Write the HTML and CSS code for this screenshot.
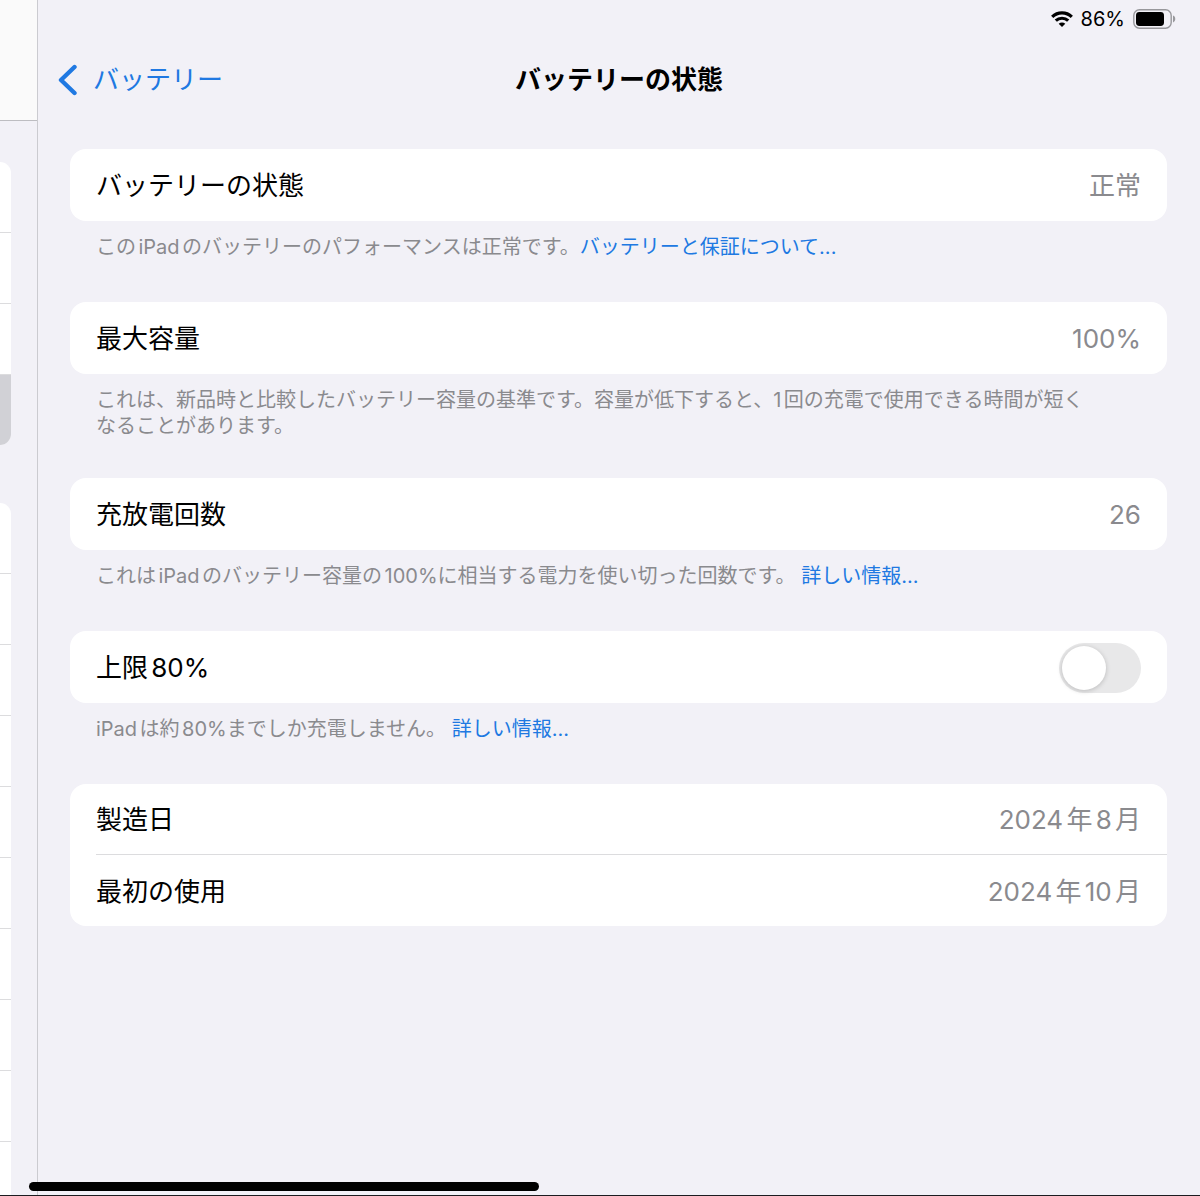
FILE: index.html
```html
<!DOCTYPE html>
<html lang="ja">
<head>
    <meta charset="UTF-8">
    <meta name="viewport" content="width=device-width, initial-scale=1.0">
    <title>バッテリーの状態</title>
    <link rel="stylesheet" href="styles.css">
</head>
<body>
    <aside class="sidebar">
        <div class="sidebar-header"></div>
        <ul class="menu">
            <li></li>
            <li></li>
            <li></li>
            <li class="selected"></li>
        </ul>
        <ul class="menu">
            <li></li>
            <li></li>
            <li></li>
            <li></li>
            <li></li>
            <li></li>
            <li></li>
            <li></li>
            <li></li>
            <li></li>
        </ul>
    </aside>

    <main class="detail">
        <div class="status-bar">
            <svg class="wifi" width="22" height="16" viewBox="0 0 22 16" fill="none" stroke="#000" stroke-width="3.200">
                <path d="M1.200 5.800C6.600 .5 15.400 .5 20.800 5.800"/>
                <path d="M4.800 9.700c3.400-3.300 9-3.300 12.400 0"/>
                <path d="M11 16 7.700 12.800c1.800-1.700 4.800-1.700 6.600 0z" fill="#000" stroke="none"/>
            </svg>
            <span>86%</span>
            <svg class="battery" width="43" height="20" viewBox="0 0 43 20">
                <rect x=".8" y=".8" width="37.400" height="18.400" rx="5.600" fill="none" stroke="#98989c" stroke-width="1.400"/>
                <rect x="3" y="3" width="28" height="14" rx="3.400" fill="#000"/>
                <path d="M40 6.600c3 1 3 5.800 0 6.800z" fill="#98989c"/>
            </svg>
        </div>

        <header class="nav-bar">
            <a href="#" class="back">
                <svg width="20" height="32" viewBox="0 0 20 32" fill="none" stroke="#2079e2" stroke-width="4.400" stroke-linecap="round" stroke-linejoin="round">
                    <path d="M16.500 3 3 16l13.500 13"/>
                </svg>
                <span>バッテリー</span>
            </a>
            <h1>バッテリーの状態</h1>
        </header>

        <div class="settings">
            <section>
                <div class="card">
                    <div class="row"><span>バッテリーの状態</span><span class="value">正常</span></div>
                </div>
                <p class="note">このiPadのバッテリーのパフォーマンスは正常です。<a href="#">バッテリーと保証について...</a></p>
            </section>

            <section>
                <div class="card">
                    <div class="row"><span>最大容量</span><span class="value">100%</span></div>
                </div>
                <p class="note">これは、新品時と比較したバッテリー容量の基準です。容量が低下すると、1回の充電で使用できる時間が短くなることがあります。</p>
            </section>

            <section>
                <div class="card">
                    <div class="row"><span>充放電回数</span><span class="value">26</span></div>
                </div>
                <p class="note">これはiPadのバッテリー容量の100%に相当する電力を使い切った回数です。 <a href="#">詳しい情報...</a></p>
            </section>

            <section>
                <div class="card">
                    <div class="row">
                        <label for="limit">上限80%</label>
                        <input type="checkbox" id="limit" class="switch" role="switch">
                    </div>
                </div>
                <p class="note">iPadは約80%までしか充電しません。 <a href="#">詳しい情報...</a></p>
            </section>

            <section>
                <div class="card">
                    <div class="row"><span>製造日</span><span class="value">2024年8月</span></div>
                    <div class="row"><span>最初の使用</span><span class="value">2024年10月</span></div>
                </div>
            </section>
        </div>
    </main>

    <div class="home-indicator"></div>
</body>
</html>
```
FILE: styles.css
```css
:root {
    --background: #f2f1f7;
    --line: #dcdcde;
    --blue: #2079e2;
    --gray: #8a8a8e;
}

* {
    box-sizing: border-box;
}

body {
    font-family: Inter, "Noto Sans CJK JP", sans-serif;
    font-size: 26px;
    line-height: 36px;
    text-autospace: normal;
    background: var(--background);
    color: #000;
    margin: 0;
    height: 100vh;
    display: flex;
    overflow: hidden;
    border-bottom: 1px solid #1c1c20;
}

a {
    color: var(--blue);
    text-decoration: none;
}

/* Sidebar */
.sidebar {
    flex: 0 0 38px;
    border-right: 1px solid #cbcbd0;
    overflow: hidden;
}

.sidebar-header {
    height: 121px;
    background: #fafafa;
    border-bottom: 1px solid #bdbdc1;
    margin-bottom: 41px;
}

.menu {
    list-style: none;
    margin: 0 26px 58px 0;
    padding: 0;
    background: #fff;
    border-radius: 0 14px 14px 0;
    overflow: hidden;
}

.menu li {
    height: 71px;
    border-bottom: 1px solid var(--line);
}

.menu li:last-child {
    height: 70px;
    border-bottom: none;
}

.menu .selected {
    background: #d1d1d6;
}

/* Detail pane */
.detail {
    flex: 1;
    min-width: 0;
    overflow-y: auto;
}

.status-bar {
    height: 38px;
    padding-right: 24px;
    display: flex;
    justify-content: flex-end;
    align-items: center;
    gap: 8px;
    font-size: 20px;
}

.nav-bar {
    height: 82px;
    padding: 2px 20px 0;
    display: grid;
    grid-template-columns: 1fr auto 1fr;
    align-items: center;
}

.back {
    display: flex;
    align-items: center;
    gap: 15px;
}

h1 {
    margin: 0;
    font-size: 26px;
    font-weight: 600;
}

.settings {
    padding: 29px 33px 29px 32px;
}

.card {
    background: #fff;
    border-radius: 16px;
}

.row {
    min-height: 72px;
    margin-left: 26px;
    padding: 2px 26px 0 0;
    display: flex;
    justify-content: space-between;
    align-items: center;
}

.row:not(:last-child) {
    min-height: 70px;
}

.row + .row {
    border-top: 1px solid var(--line);
}

.value {
    color: var(--gray);
}

.note {
    margin: 0;
    min-height: 81px;
    padding: 13px 70px 39px 26px;
    font-size: 20px;
    line-height: 26px;
    color: var(--gray);
}

.switch {
    appearance: none;
    margin: 0;
    width: 82px;
    height: 50px;
    padding: 3px;
    border-radius: 25px;
    background: #e8e8e9;
    cursor: pointer;
}

.switch::before {
    content: "";
    display: block;
    width: 44px;
    height: 44px;
    border-radius: 50%;
    background: #fff;
    box-shadow: 0 1px 5px rgba(0, 0, 0, 0.2);
    transition: margin 0.2s;
}

.switch:checked {
    background: #34c759;
}

.switch:checked::before {
    margin-left: 32px;
}

.home-indicator {
    position: absolute;
    left: 29px;
    bottom: 5px;
    width: 510px;
    height: 9px;
    border-radius: 5px;
    background: #000;
}
```
